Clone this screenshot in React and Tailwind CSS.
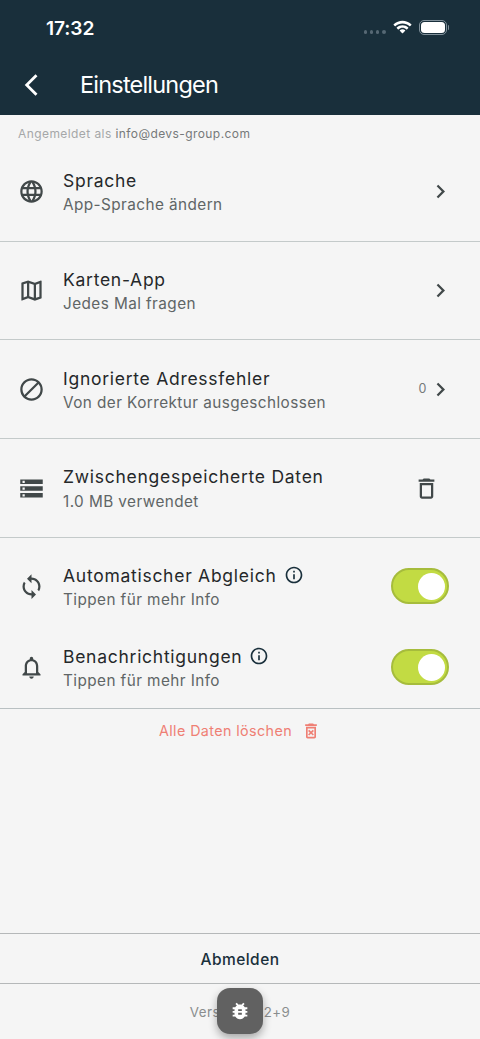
import React, { useState } from 'react';
import {
  MdBlock,
  MdBugReport,
  MdChevronRight,
  MdInfoOutline,
  MdLanguage,
  MdNotificationsNone,
  MdOutlineDelete,
  MdOutlineDeleteForever,
  MdOutlineMap,
  MdStorage,
  MdSync,
} from 'react-icons/md';

const StatusBar = () => (
  <div className="flex h-[54px] items-center justify-between pl-[46px] pr-[31px]">
    <span className="pt-[2px] text-[19.2px] font-semibold tracking-[-0.1px]">17:32</span>
    <div className="flex items-center">
      <div className="mt-[10px] mr-[7px] flex gap-[2.4px]">
        {[0, 1, 2, 3].map((dot) => (
          <span key={dot} className="size-[3.7px] rounded-full bg-[#566874]" />
        ))}
      </div>
      <svg className="mr-[7px] h-[15px] w-[19px]" viewBox="0 0 17 12" fill="currentColor">
        <path d="M8.5 2.4c2.4 0 4.6.9 6.3 2.5.1.1.3.1.4 0l1.2-1.2c.1-.1.1-.3 0-.5-4.4-4.2-11.4-4.2-15.8 0-.1.2-.1.4 0 .5l1.2 1.2c.1.1.3.1.4 0C3.9 3.3 6.1 2.4 8.5 2.4z" />
        <path d="M8.5 6.3c1.3 0 2.5.5 3.5 1.4.1.1.3.1.5 0l1.2-1.2c.1-.1.1-.3 0-.5-2.9-2.7-7.5-2.7-10.4 0-.1.2-.1.4 0 .5l1.2 1.2c.2.1.4.1.5 0 1-.9 2.2-1.4 3.5-1.4z" />
        <path d="M10.9 9c.1-.1.1-.4 0-.5-1.4-1.2-3.4-1.2-4.8 0-.1.1-.1.4 0 .5l2.1 2.1c.2.2.4.2.6 0L10.9 9z" />
      </svg>
      <div className="flex items-center gap-px">
        <div className="h-[15px] w-[28px] rounded-[5px] border border-[#80909a] p-px">
          <div className="h-full w-full rounded-[3.5px] bg-white" />
        </div>
        <div className="h-[5px] w-[1.5px] rounded-r-full bg-[#80909a]" />
      </div>
    </div>
  </div>
);

const Switch = ({ checked, onChange }) => (
  <button
    type="button"
    role="switch"
    aria-checked={checked}
    onClick={onChange}
    className={`flex h-[36px] w-[58px] shrink-0 items-center rounded-full border-2 border-[#a6bc3c] px-[2px] ${
      checked ? 'justify-end bg-[#c2db43]' : 'justify-start bg-[#c8cccc]'
    }`}
  >
    <span className="size-[27px] rounded-full bg-white" />
  </button>
);

const SettingRow = ({ icon: Icon, title, subtitle, info, className, children }) => (
  <div className={`flex items-center pl-[18px] pr-[31.5px] ${className}`}>
    <Icon className="size-[27px] shrink-0 text-[#414849]" />
    <div className="ml-[18px] flex-1 pt-[2px] whitespace-nowrap">
      <div className="flex h-[26px] items-center text-[17.5px] tracking-[0.73px] text-[#25282a]">
        {title}
        {info && <MdInfoOutline className="relative -top-px ml-[7px] size-[20px] text-[#1a303c]" />}
      </div>
      <div className="flex h-[23px] items-center text-[15.3px] tracking-[0.43px] text-[#606566]">{subtitle}</div>
    </div>
    {children}
  </div>
);

const Chevron = () => <MdChevronRight className="-mr-[5px] size-[27px] text-[#414849]" />;

const rowHeight = 'h-[98.75px] border-b border-[#c4caca]';

const App = () => {
  const [autoSync, setAutoSync] = useState(true);
  const [notifications, setNotifications] = useState(true);

  return (
    <div className="flex h-[1039px] w-[480px] flex-col overflow-hidden bg-[#f5f5f5] font-['Inter',sans-serif]">
      <header className="h-[115.4px] shrink-0 bg-[#192f3b] text-white">
        <StatusBar />
        <div className="flex h-[61px] items-center pl-[24px]">
          <svg className="h-[22px] w-[14px]" viewBox="0 0 14 22" fill="none" stroke="currentColor" strokeWidth="2.8">
            <path d="M12.5 1.2 2.7 11l9.8 9.8" />
          </svg>
          <h1 className="ml-[42px] text-[23.5px] tracking-[-0.8px]">Einstellungen</h1>
        </div>
      </header>

      <p className="flex h-[27.6px] shrink-0 items-end pb-px pl-[18px] text-[12px] leading-[17px] tracking-[0.42px] text-[#a5a7a8]">
        <span className="whitespace-pre">Angemeldet als </span>
        <span className="text-[#76797a]">info@devs-group.com</span>
      </p>

      <main className="flex-1">
        <SettingRow icon={MdLanguage} title="Sprache" subtitle="App-Sprache ändern" className={rowHeight}>
          <Chevron />
        </SettingRow>
        <SettingRow icon={MdOutlineMap} title="Karten-App" subtitle="Jedes Mal fragen" className={rowHeight}>
          <Chevron />
        </SettingRow>
        <SettingRow
          icon={MdBlock}
          title="Ignorierte Adressfehler"
          subtitle="Von der Korrektur ausgeschlossen"
          className={rowHeight}
        >
          <span className="text-[12.5px] text-[#76797a]">0</span>
          <Chevron />
        </SettingRow>
        <SettingRow icon={MdStorage} title="Zwischengespeicherte Daten" subtitle="1.0 MB verwendet" className={rowHeight}>
          <MdOutlineDelete className="mr-[9px] size-[27px] text-[#414849]" />
        </SettingRow>

        <div className="border-b border-[#b9c0c2] pt-[8px]">
          <SettingRow
            icon={MdSync}
            title="Automatischer Abgleich"
            subtitle="Tippen für mehr Info"
            info
            className="h-[81px]"
          >
            <Switch checked={autoSync} onChange={() => setAutoSync(!autoSync)} />
          </SettingRow>
          <SettingRow
            icon={MdNotificationsNone}
            title="Benachrichtigungen"
            subtitle="Tippen für mehr Info"
            info
            className="h-[81px]"
          >
            <Switch checked={notifications} onChange={() => setNotifications(!notifications)} />
          </SettingRow>
        </div>

        <button
          type="button"
          className="flex h-[44px] w-full items-center justify-center text-[14.3px] tracking-[0.4px] text-[#ef7f74]"
        >
          Alle Daten löschen
          <MdOutlineDeleteForever className="ml-[9px] size-[20px]" />
        </button>
      </main>

      <footer className="relative h-[106px] shrink-0">
        <button
          type="button"
          className="h-[51px] w-full border-y border-[#b5b8b9] pt-[2px] text-[15.5px] font-medium tracking-[0.45px] text-[#1a303c]"
        >
          Abmelden
        </button>
        <p className="mt-[19px] text-center text-[13.3px] leading-[18px] tracking-[0.45px] text-[#8a8d8e]">
          Version 1.1.2+9
        </p>
        <button
          type="button"
          className="absolute top-[55px] left-[217px] flex size-[46px] items-center justify-center rounded-[13px] bg-[#616161] text-white shadow-[0_4px_9px_rgba(0,0,0,0.32)]"
        >
          <MdBugReport className="size-[22px]" />
        </button>
      </footer>
    </div>
  );
};

export default App;
